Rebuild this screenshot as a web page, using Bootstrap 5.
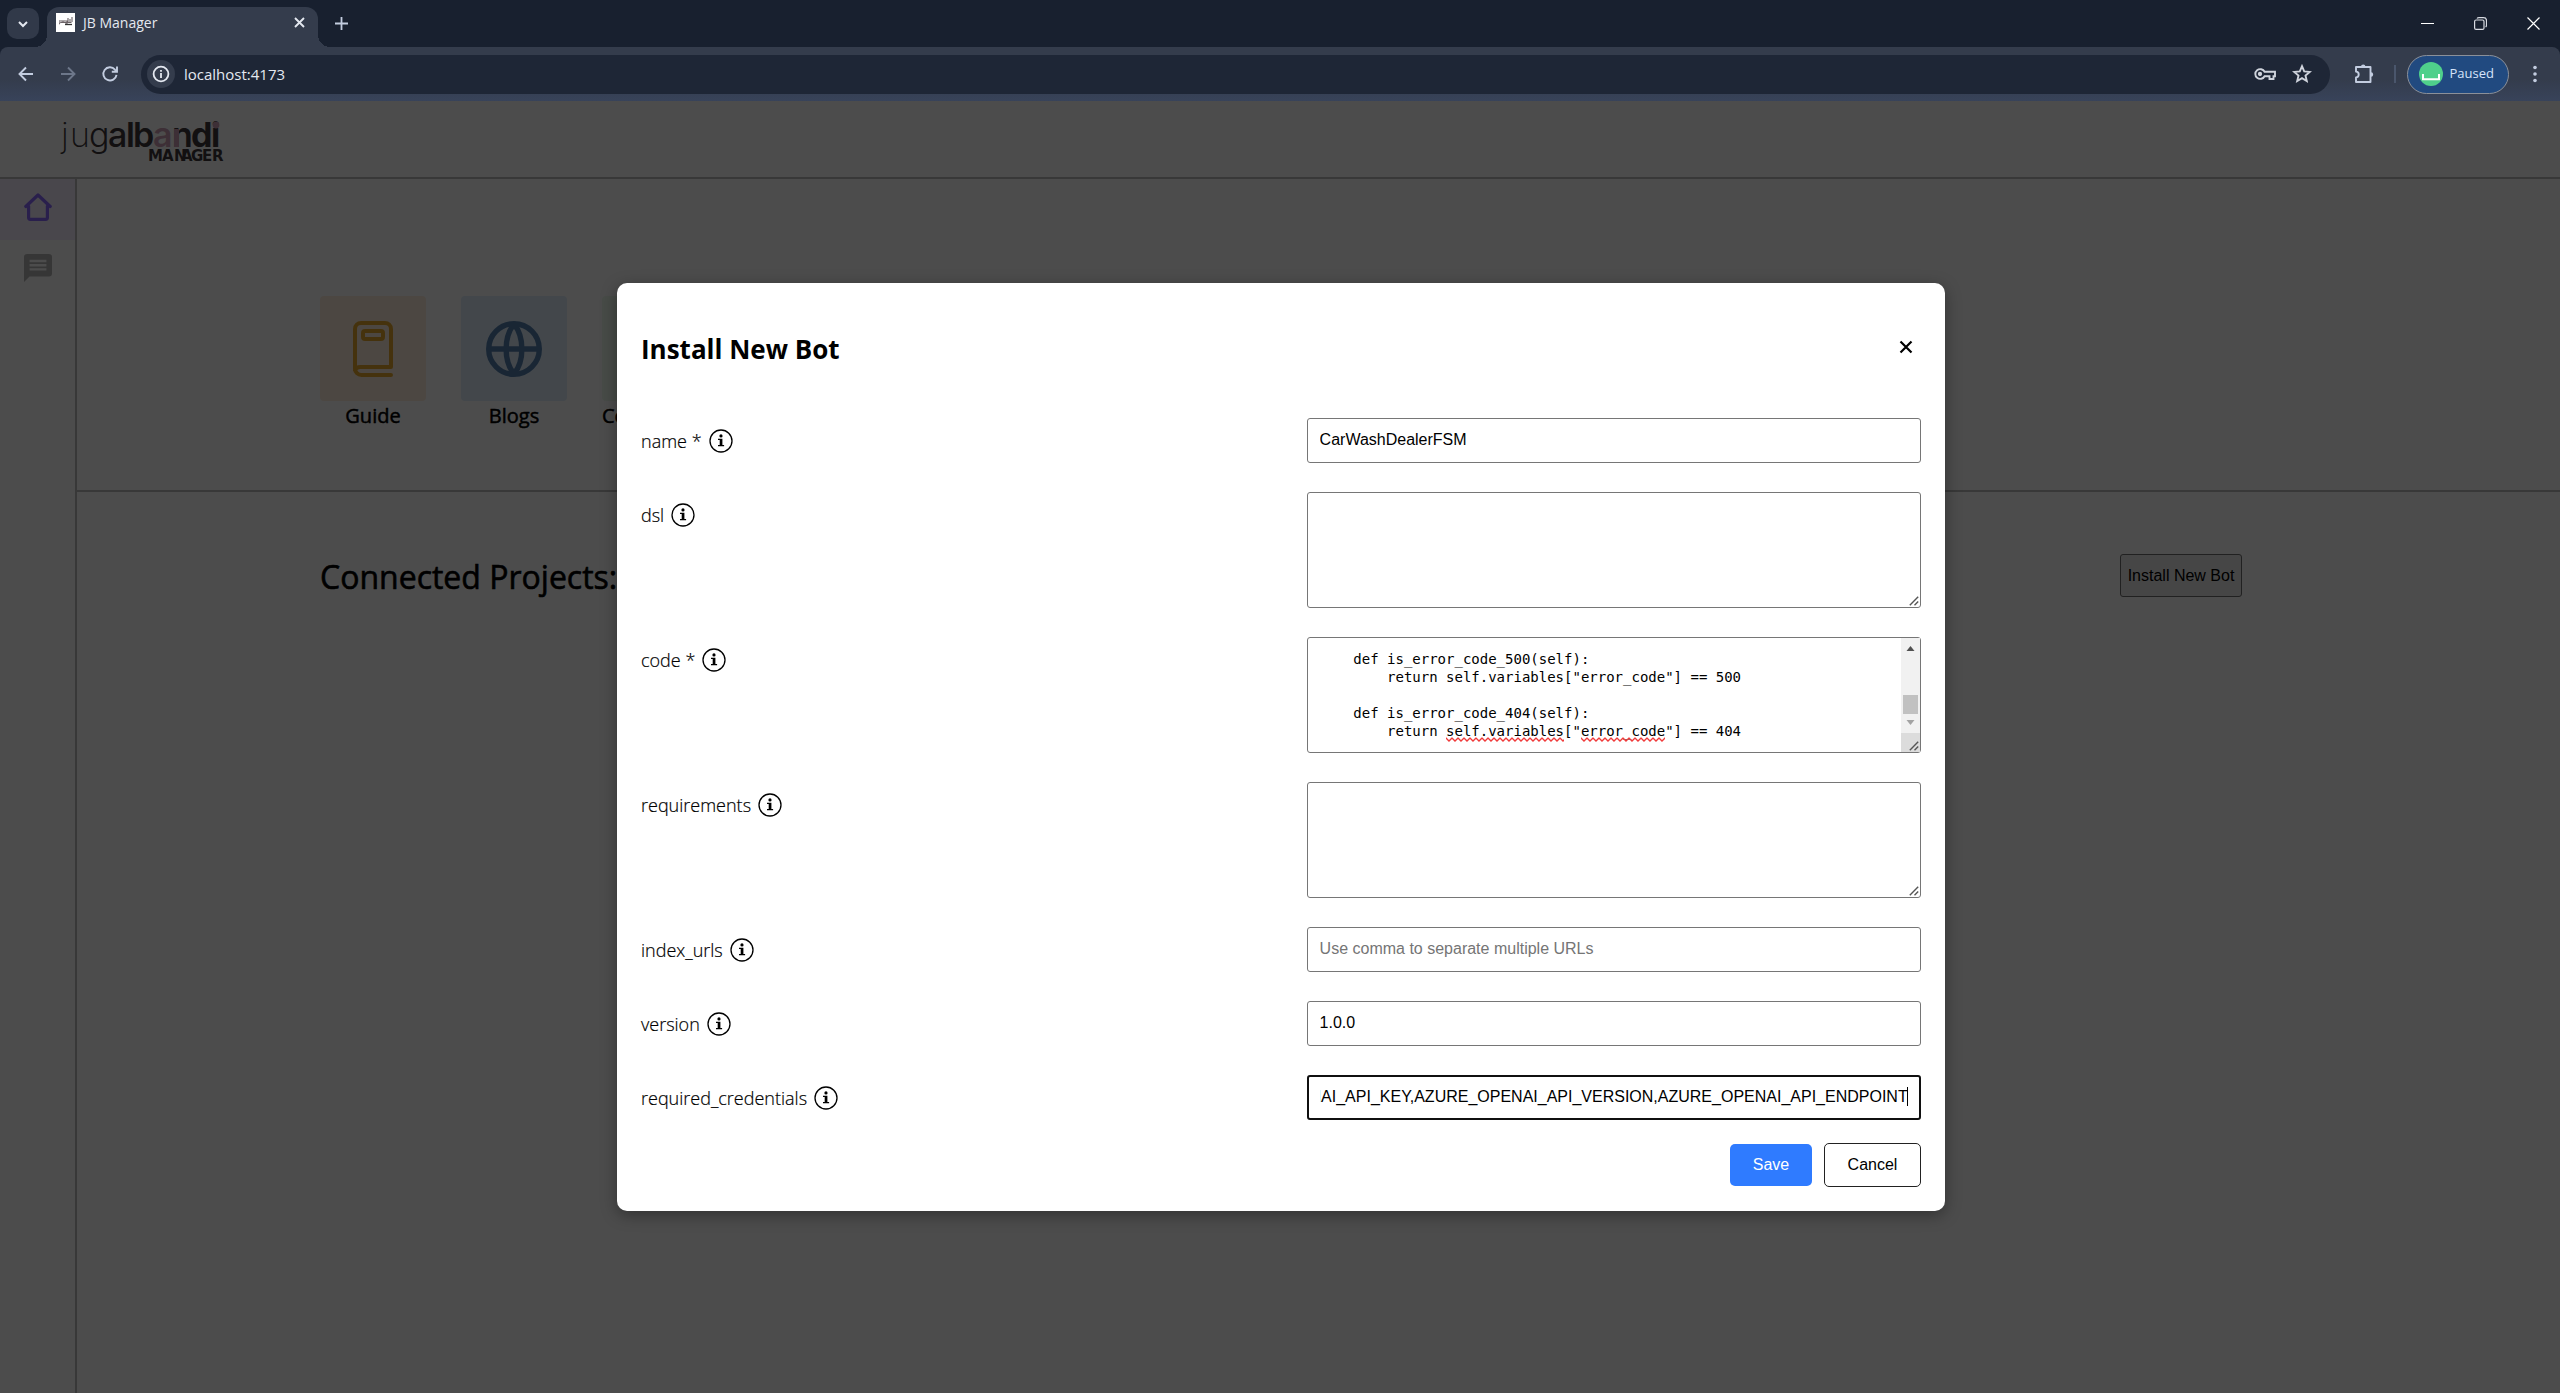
<!DOCTYPE html>
<html lang="en">
<head>
<meta charset="utf-8">
<meta name="viewport" content="width=device-width, initial-scale=1">
<title>JB Manager</title>
<link href="https://cdn.jsdelivr.net/npm/bootstrap@5.3.0/dist/css/bootstrap.min.css" rel="stylesheet">
<style>
  body { font-family: "Open Sans", "Noto Sans", sans-serif; color: #000; background: #fff; overflow: hidden; }
  button { font-family: inherit; }
  svg { display: block; flex: none; }
  .plain-btn { border: 0; padding: 0; background: none; color: inherit; display: inline-flex; align-items: center; justify-content: center; }

  /* Browser frame */
  .tab-strip { height: 47px; background: #18202f; color: #e4e8f0; padding: 7px 20px 0 7px; }
  .tab-search { width: 32px; height: 31px; border-radius: 10px; background: #313949; margin-top: 1px; }
  .tab-item { position: relative; width: 271px; height: 40px; margin-left: 8px; padding: 0 13px 9px 9px; background: #343c4c; border-radius: 12px 12px 0 0; font-size: 14px; line-height: 20px; }
  .tab-item::before, .tab-item::after { content: ""; position: absolute; bottom: 0; width: 12px; height: 12px; }
  .tab-item::before { left: -12px; background: radial-gradient(circle at 0 0, transparent 12px, #343c4c 12px); }
  .tab-item::after { right: -12px; background: radial-gradient(circle at 100% 0, transparent 12px, #343c4c 12px); }
  .new-tab { width: 32px; height: 32px; margin-left: 7px; }
  .window-btns { gap: 40px; height: 33px; }
  .tool-bar { height: 54px; background: linear-gradient(#343c4c 60%, #38435a); color: #c3cde0; padding: 0 23px 0 17px; border-radius: 8px 8px 0 0; }
  .strip-back { background: #18202f; }
  .nav-btns { gap: 24px; margin-right: 22px; }
  .omni-box { height: 39px; border-radius: 20px; background: #1e2636; color: #e4e8f0; padding: 0 18px 0 6px; }
  .omni-info { width: 28px; height: 28px; border-radius: 50%; background: #343c4c; }
  .omni-url { background: none; border: 0; outline: 0; padding: 0; margin-left: 9px; color: #e4e8f0; font-size: 15px; line-height: 24px; }
  .bar-split { width: 2px; height: 18px; background: #4a566c; margin: 0 11px 0 20px; }
  .pause-btn { height: 39px; border: 1px solid #8b9099; border-radius: 20px; background: #214a80; color: #d6e4fb; padding: 0 14px 0 11px; font-size: 13px; gap: 7px; }

  /* App */
  .app-head { height: 78px; border-bottom: 2px solid #bbb; padding: 18px 0 0 60px; }
  .side-nav { width: 77px; border-right: 2px solid #bbb; }
  .side-link { height: 56px; display: flex; align-items: center; justify-content: center; color: #b5b5b5; }
  .side-link.current { height: 61px; background: #f3eeff; color: #8b68ff; padding-bottom: 5px; }
  .tile-row { padding: 117px 318px 59px 243px; gap: 35px; border-bottom: 2px solid #bbb; }
  .tile-link { width: 106px; color: #000; text-decoration: none; font-weight: 500; font-size: 20px; line-height: 30px; white-space: nowrap; text-align: center; -webkit-text-stroke: .5px #000; }
  .tile-icon { height: 105px; border-radius: 4px; display: flex; align-items: center; justify-content: center; }
  .tile-guide { background: #fdeedd; color: #e8a92e; }
  .tile-blogs { background: #e0eefa; color: #5580b0; }
  .tile-community { background: #effbef; color: #4f9a5c; }
  .project-row { padding: 62px 318px 0 243px; }
  .project-title { font-size: 32px; line-height: 46px; font-weight: 500; -webkit-text-stroke: .6px #000; }
  .install-btn { height: 43px; width: 122px; border: 1px solid #6e6e6e; border-radius: 3px; background: #ebebeb; font: 16px "Liberation Sans", sans-serif; padding: 0; color: #000; }

  /* Dialog */
  .page-shade { background: rgba(0,0,0,.7); padding-left: 2px; }
  .bot-dialog { width: 100%; max-width: 1328px; background: #fff; border-radius: 10px; padding: 45px 24px 24px; box-shadow: 0 4px 16px rgba(0,0,0,.35); }
  .dialog-title { font-size: 26px; line-height: 42px; font-weight: 700; margin-bottom: 48px; }
  .field-list { display: flex; flex-direction: column; gap: 29px; }
  .field-name { font-weight: 300; font-size: 18px; line-height: 26px; margin-top: 10px; gap: 7px; -webkit-text-stroke: .2px #000; }
  .field-box { width: 48%; position: relative; }
  .text-field { display: block; width: 100%; border: 1px solid #767676; border-radius: 3px; background: #fff; color: #000; font: 16px "Liberation Sans", sans-serif; padding: 0 12px 2px; height: 45px; outline: 0; }
  .text-field::placeholder { color: #757575; opacity: 1; }
  textarea.text-field { height: 116px; padding: 12px; resize: none; overflow: hidden; }
  textarea.code-field, .squiggle { font: 14px/18px "DejaVu Sans Mono", monospace; }
  textarea.code-field { white-space: pre; }
  .active-field { border: 2px solid #101010; padding: 0 11px 1px; caret-color: transparent; }
  .caret-line { position: absolute; right: 13px; top: 12px; width: 1px; height: 19px; background: #000; }
  .grip { position: absolute; right: 2px; bottom: 2px; }
  .squiggle { position: absolute; top: 100px; height: 5px; }
  .squiggle svg { width: 100%; height: 5px; }
  .squiggle-a { left: calc(13px + 15ch); width: 14ch; }
  .squiggle-b { left: calc(13px + 31ch); width: 10ch; }
  .scroll-rail { position: absolute; top: 1px; right: 1px; bottom: 1px; width: 19px; background: #f1f1f1; }
  .dialog-btns { gap: 12px; margin-top: 23px; }
  .dialog-btns .btn { font: 16px "Liberation Sans", sans-serif; padding: 0; border-radius: 5px; }
  .save-btn { width: 82px; height: 42px; background: #2f7bff; color: #fff; border: 0; }
  .cancel-btn { width: 97px; height: 44px; border: 1px solid #222; color: #000; background: #fff; }
</style>
</head>
<body class="vh-100 d-flex flex-column">
<svg width="0" height="0" class="position-absolute" aria-hidden="true">
  <symbol id="info" viewBox="0 0 24 24"><circle cx="12" cy="12" r="11" fill="none" stroke="#000" stroke-width="1.3"/><circle cx="12" cy="6.900" r="1.600"/><path d="M9 9.800h4.400v6.200h1.700v1.200H9v-1.200h1.700v-5H9z"/></symbol>
  <symbol id="grip" viewBox="0 0 10 10"><path d="M.8 9.200 9.200.8M5.500 9.200 9.200 5.500" fill="none" stroke="#555" stroke-width="1.400"/></symbol>
  <pattern id="wave" width="6" height="5" patternUnits="userSpaceOnUse"><path d="M-1 .2 0 1l3 3 3-3 1-.8" fill="none" stroke="#f03a3a" stroke-width="1.300"/></pattern>
</svg>

<header>
  <div class="tab-strip d-flex">
    <button class="plain-btn tab-search" aria-label="Search tabs"><svg width="12" height="12" viewBox="0 0 12 12" fill="none" stroke="currentColor" stroke-width="2"><path d="m2 4 4 4 4-4"/></svg></button>
    <div class="tab-item d-flex align-items-center">
      <svg width="19" height="19" viewBox="0 0 19 19"><path fill="#fff" d="M0 0h19v19H0z"/><path d="M3 11c1 0 1-3 1-4m2 0v2h2V7m1 1h2v3H9M12 5v4m2-3v3m2-5v5M4.500 9.500h11" fill="none" stroke="#6b6165" stroke-width="1.100"/><path d="M9 11.500h7" stroke="#333" stroke-width="1.300"/></svg>
      <span class="ms-2 flex-grow-1">JB Manager</span>
      <button class="plain-btn" aria-label="Close tab"><svg width="11" height="11" viewBox="0 0 11 11" stroke="currentColor" stroke-width="1.900"><path d="m1 1 9 9M10 1l-9 9"/></svg></button>
    </div>
    <button class="plain-btn new-tab" aria-label="New tab"><svg width="13" height="13" viewBox="0 0 13 13" stroke="#c3cde0" stroke-width="1.800"><path d="M6.500 0v13M0 6.500h13"/></svg></button>
    <div class="window-btns d-flex align-items-center ms-auto">
      <button class="plain-btn" aria-label="Minimize"><svg width="13" height="13" viewBox="0 0 13 13" stroke="#fff"><path d="M0 6.500h13"/></svg></button>
      <button class="plain-btn" aria-label="Restore"><svg width="13" height="13" viewBox="0 0 13 13" fill="none" stroke="#d8dbe2" stroke-width="1.200"><rect x=".6" y="3" width="9.400" height="9.400" rx="1.500"/><path d="M3 1.500C3.500.8 4 .6 5 .6h4.500c2 0 3 1 3 3V8c0 1-.2 1.600-.9 2.100"/></svg></button>
      <button class="plain-btn" aria-label="Close window"><svg width="13" height="13" viewBox="0 0 13 13" stroke="#fff" stroke-width="1.200"><path d="m.5.5 12 12M12.500.5l-12 12"/></svg></button>
    </div>
  </div>
  <div class="strip-back">
  <div class="tool-bar d-flex align-items-center">
    <div class="nav-btns d-flex">
      <button class="plain-btn" aria-label="Back"><svg width="18" height="18" viewBox="0 0 18 18" fill="none" stroke="currentColor" stroke-width="1.900"><path d="M16 9H3M9 2.500 2.500 9 9 15.500"/></svg></button>
      <button class="plain-btn" aria-label="Forward"><svg width="18" height="18" viewBox="0 0 18 18" fill="none" stroke="#6d778a" stroke-width="1.900"><path d="M2 9h13M9 2.500 15.500 9 9 15.500"/></svg></button>
      <button class="plain-btn" aria-label="Reload"><svg width="18" height="18" viewBox="0 0 18 18" fill="none" stroke="currentColor" stroke-width="1.900"><path d="M15.500 9.800A6.600 6.600 0 1 1 14 4.600L15.800 6.500M16 1.500v5.200h-5.200"/></svg></button>
    </div>
    <div class="omni-box d-flex align-items-center flex-grow-1">
      <button class="plain-btn omni-info" aria-label="Site information"><svg width="18" height="18" viewBox="0 0 18 18" fill="none" stroke="currentColor" stroke-width="1.800"><circle cx="9" cy="9" r="7.400"/><path d="M9 8v5M9 5v1.800"/></svg></button>
      <input class="omni-url flex-grow-1" aria-label="Address" value="localhost:4173">
      <button class="plain-btn me-3" aria-label="Passwords"><svg width="22" height="14" viewBox="0 0 22 14" fill="none" stroke="#cfd3dc" stroke-width="1.900"><path d="M10.600 4.800H21v4.400h-1.500V12h-4V9.200h-4.900a4.900 4.900 0 1 1 0-4.400Z"/><circle cx="6" cy="7" r="1.200" fill="#cfd3dc"/></svg></button>
      <button class="plain-btn" aria-label="Bookmark"><svg width="20" height="20" viewBox="0 0 20 20" fill="none" stroke="#cfd3dc" stroke-width="1.900"><path d="m10 2.200 2.200 5.200 5.600.5-4.300 3.700 1.300 5.500L10 14.200l-4.800 2.900 1.300-5.500L2.200 7.900l5.600-.5Z"/></svg></button>
    </div>
    <button class="plain-btn ms-4" aria-label="Extensions"><svg width="20" height="20" viewBox="0 0 20 20" fill="none" stroke="currentColor" stroke-width="1.900" stroke-linejoin="round"><path d="M2 3h14.500v15H2v-4.500c3.600-.4 3.600-5.600 0-6Z"/><path d="M7 2.600a2.200 2.200 0 0 1 4.400 0ZM17 8.300a2.200 2.200 0 0 1 0 4.400Z" fill="currentColor" stroke="none"/></svg></button>
    <div class="bar-split"></div>
    <button class="pause-btn d-flex align-items-center"><svg width="24" height="24" viewBox="0 0 24 24"><circle cx="12" cy="12" r="12" fill="#4fd08b"/><path d="M4 12v5.200h16V12" fill="none" stroke="#fff" stroke-width="2"/></svg>Paused</button>
    <button class="plain-btn ms-4" aria-label="Menu"><svg width="4" height="18" viewBox="0 0 4 18" fill="currentColor"><circle cx="2" cy="2.500" r="1.800"/><circle cx="2" cy="9" r="1.800"/><circle cx="2" cy="15.500" r="1.800"/></svg></button>
  </div>
  </div>
</header>

<div class="flex-grow-1 position-relative d-flex flex-column">
  <div class="app-head">
    <svg width="170" height="46" viewBox="0 0 170 46" role="img" aria-label="jugalbandi manager" font-family="Inter, sans-serif" font-size="34" fill="#3c373a">
      <text y="28"><tspan x="1" font-weight="200">j</tspan><tspan x="10" font-weight="200">u</tspan><tspan x="29" font-weight="300">g</tspan><tspan x="48" font-weight="500">a</tspan><tspan x="66" font-weight="600">l</tspan><tspan x="73" font-weight="600">b</tspan><tspan x="93" font-weight="600" fill="#cc9fb5">a</tspan><tspan x="112" font-weight="600">n</tspan><tspan x="131" font-weight="700">d</tspan><tspan x="151" font-weight="700">i</tspan></text>
      <path fill="#cc9fb5" d="M114 10h5v18h-5z"/><circle cx="156" cy="6" r="3.400" fill="#cc9fb5"/>
      <text y="42" font-family="DejaVu Sans" font-weight="700" font-size="15" x="88 102 114 121 131 142 152">MANAGER</text>
    </svg>
  </div>
  <div class="d-flex flex-grow-1">
    <nav class="side-nav" aria-label="Main">
      <a href="#" class="side-link current" aria-label="Home"><svg width="28" height="28" viewBox="0 0 28 28" fill="none" stroke="currentColor" stroke-width="3.200" stroke-linejoin="round" stroke-linecap="round"><path d="M1.800 13.500 14 2l12.200 11.500M4.600 13v11.500q0 1.800 1.800 1.800h15.200q1.800 0 1.800-1.800V13"/></svg></a>
      <a href="#" class="side-link" aria-label="Chat"><svg width="28" height="28" viewBox="0 0 28 28"><path fill="currentColor" d="M3 0h22q3 0 3 3v16.500q0 3-3 3H5.500L0 28V3q0-3 3-3Z"/><path d="M5.600 7h16.800M5.600 11.200h16.800M5.600 15.400h16.800" stroke="#fff" stroke-width="2.400"/></svg></a>
    </nav>
    <main class="flex-grow-1">
      <div class="tile-row d-flex">
        <a href="#" class="tile-link"><div class="tile-icon tile-guide"><svg width="40" height="56" viewBox="0 0 40 56" fill="none" stroke="currentColor" stroke-width="4" stroke-linecap="round" stroke-linejoin="round"><path d="M38 54H8.500A6.500 6.500 0 0 1 2 47.500V8a6 6 0 0 1 6-6h24a6 6 0 0 1 6 6v38H8a6 6 0 0 0-6 3"/><rect x="10" y="10" width="20" height="8" rx="2"/></svg></div>Guide</a>
        <a href="#" class="tile-link"><div class="tile-icon tile-blogs"><svg width="56" height="56" viewBox="0 0 56 56" fill="none" stroke="currentColor" stroke-width="5.400"><circle cx="28" cy="28" r="25.300"/><path d="M3 28h50M28 3c-10.500 13-10.500 37 0 50M28 3c10.500 13 10.500 37 0 50"/></svg></div>Blogs</a>
        <a href="#" class="tile-link"><div class="tile-icon tile-community"></div>Community</a>
      </div>
      <div class="project-row d-flex justify-content-between align-items-start">
        <h2 class="project-title mb-0">Connected Projects:</h2>
        <button class="install-btn">Install New Bot</button>
      </div>
    </main>
  </div>

  <div class="page-shade position-absolute top-0 start-0 w-100 h-100 d-flex align-items-center justify-content-center">
    <form class="bot-dialog" role="dialog" aria-labelledby="dialog-title">
      <div class="d-flex justify-content-between align-items-start">
        <h1 class="dialog-title" id="dialog-title">Install New Bot</h1>
        <button type="button" class="plain-btn mt-2 me-1 p-1" aria-label="Close"><svg width="14" height="14" viewBox="0 0 14 14" stroke="#000" stroke-width="2.200"><path d="m1.500 1.500 11 11M12.500 1.500l-11 11"/></svg></button>
      </div>
      <div class="field-list">
        <div class="d-flex justify-content-between align-items-start">
          <label class="field-name d-flex align-items-center" for="f-name">name * <svg width="24" height="24"><use href="#info"/></svg></label>
          <div class="field-box"><input class="text-field" id="f-name" value="CarWashDealerFSM"></div>
        </div>
        <div class="d-flex justify-content-between align-items-start">
          <label class="field-name d-flex align-items-center" for="f-dsl">dsl <svg width="24" height="24"><use href="#info"/></svg></label>
          <div class="field-box"><textarea class="text-field" id="f-dsl"></textarea><svg class="grip" width="10" height="10"><use href="#grip"/></svg></div>
        </div>
        <div class="d-flex justify-content-between align-items-start">
          <label class="field-name d-flex align-items-center" for="f-code">code * <svg width="24" height="24"><use href="#info"/></svg></label>
          <div class="field-box"><textarea class="text-field code-field" id="f-code" spellcheck="false">    def is_error_code_500(self):
        return self.variables["error_code"] == 500

    def is_error_code_404(self):
        return self.variables["error_code"] == 404</textarea>
            <div class="squiggle squiggle-a"><svg><rect width="100%" height="5" fill="url(#wave)"/></svg></div>
            <div class="squiggle squiggle-b"><svg><rect width="100%" height="5" fill="url(#wave)"/></svg></div>
            <div class="scroll-rail"><svg width="19" height="114" viewBox="0 0 19 114"><path fill="#dcdcdc" d="M0 95h19v19H0z"/><path fill="#c1c1c1" d="M2 57h15v19H2z"/><path fill="#505050" d="m9.500 8 4 5h-8z"/><path fill="#a3a3a3" d="m9.500 87 4-5h-8z"/></svg></div>
            <svg class="grip" width="10" height="10"><use href="#grip"/></svg>
          </div>
        </div>
        <div class="d-flex justify-content-between align-items-start">
          <label class="field-name d-flex align-items-center" for="f-req">requirements <svg width="24" height="24"><use href="#info"/></svg></label>
          <div class="field-box"><textarea class="text-field" id="f-req"></textarea><svg class="grip" width="10" height="10"><use href="#grip"/></svg></div>
        </div>
        <div class="d-flex justify-content-between align-items-start">
          <label class="field-name d-flex align-items-center" for="f-urls">index_urls <svg width="24" height="24"><use href="#info"/></svg></label>
          <div class="field-box"><input class="text-field" id="f-urls" placeholder="Use comma to separate multiple URLs"></div>
        </div>
        <div class="d-flex justify-content-between align-items-start">
          <label class="field-name d-flex align-items-center" for="f-version">version <svg width="24" height="24"><use href="#info"/></svg></label>
          <div class="field-box"><input class="text-field" id="f-version" value="1.0.0"></div>
        </div>
        <div class="d-flex justify-content-between align-items-start">
          <label class="field-name d-flex align-items-center" for="f-cred">required_credentials <svg width="24" height="24"><use href="#info"/></svg></label>
          <div class="field-box"><input class="text-field active-field" id="f-cred" value="AZURE_OPENAI_API_KEY,AZURE_OPENAI_API_VERSION,AZURE_OPENAI_API_ENDPOINT"><span class="caret-line"></span></div>
        </div>
      </div>
      <div class="dialog-btns d-flex justify-content-end align-items-center">
        <button type="button" class="btn save-btn">Save</button>
        <button type="button" class="btn cancel-btn">Cancel</button>
      </div>
    </form>
  </div>
</div>
<script src="https://cdn.jsdelivr.net/npm/bootstrap@5.3.0/dist/js/bootstrap.bundle.min.js"></script>
<script>
  const cred = document.getElementById('f-cred');
  cred.focus();
  cred.setSelectionRange(cred.value.length, cred.value.length);
  cred.scrollLeft = cred.scrollWidth;
</script>
</body>
</html>
